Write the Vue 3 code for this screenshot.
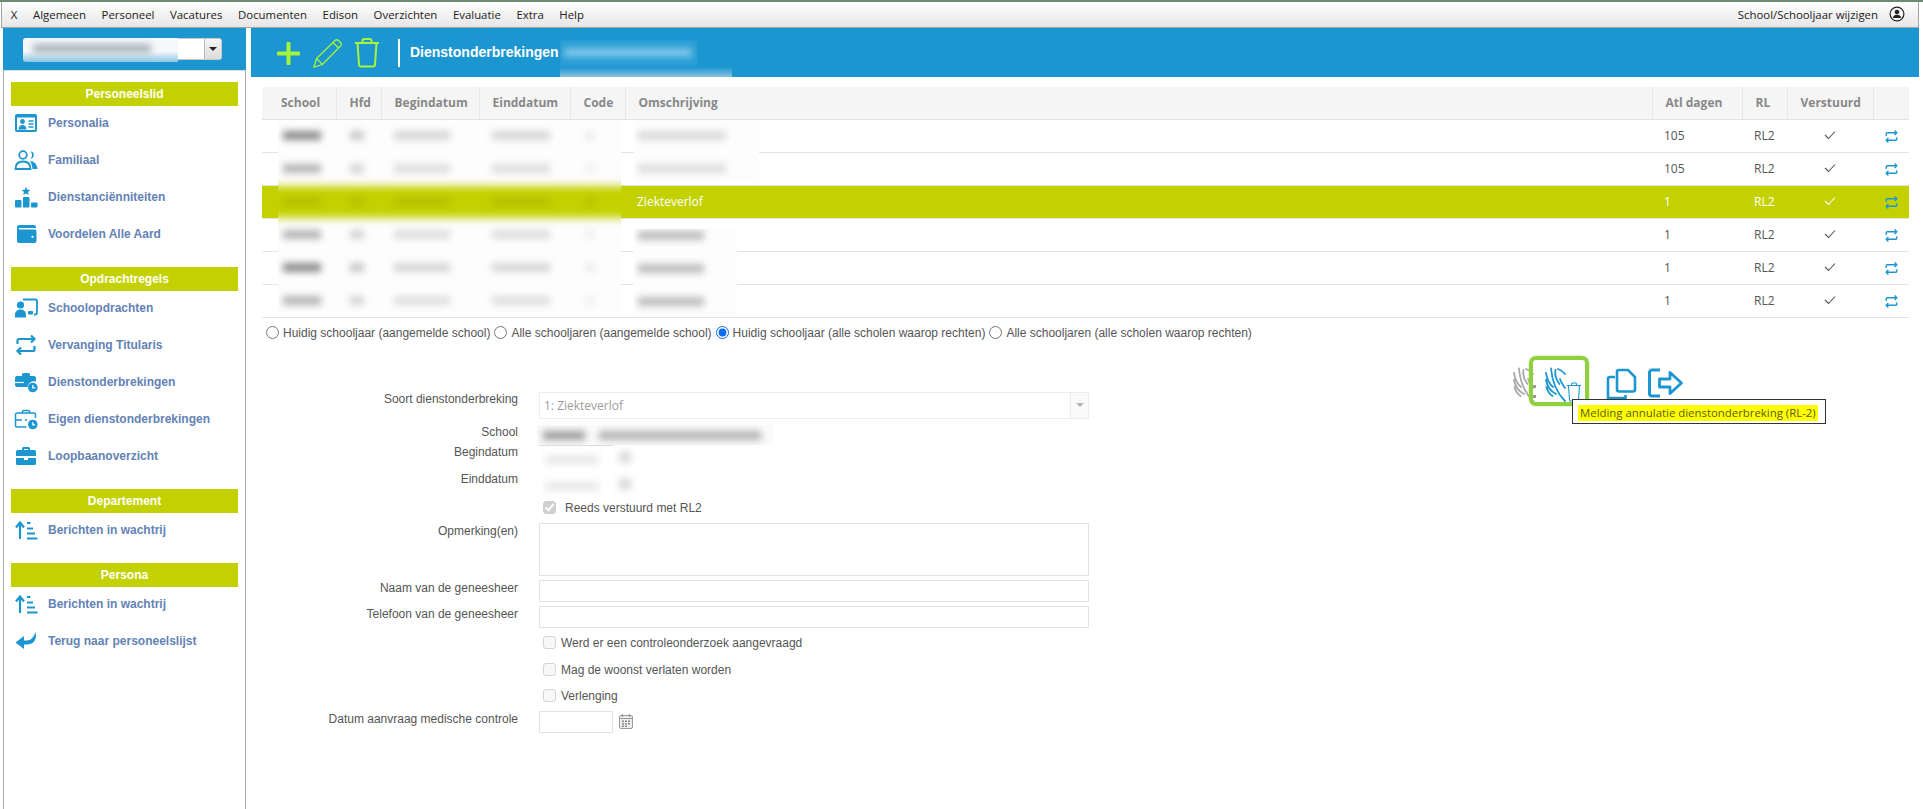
<script setup>
const menu = ['X', 'Algemeen', 'Personeel', 'Vacatures', 'Documenten', 'Edison', 'Overzichten', 'Evaluatie', 'Extra', 'Help']

const B = '#1b96d1'
const icons = {
  card: `<rect x="1" y="3" width="22" height="18" rx="2" fill="${B}"/><rect x="3" y="6.5" width="18" height="12.5" fill="#fff"/><circle cx="8.5" cy="10.5" r="2.4" fill="${B}"/><path d="M4.5 18.5c0-3 1.8-4.6 4-4.6s4 1.600 4 4.600z" fill="${B}"/><path d="M14.500 10h5M14.500 13h5M14.500 16h5" stroke="${B}" stroke-width="1.600"/>`,
  family: `<circle cx="9" cy="7" r="3.800" fill="#fff" stroke="${B}" stroke-width="1.800"/><path d="M16.500 3.200a3.900 3.900 0 0 1 0 7.700a5.500 5.500 0 0 0 0-7.700z" fill="${B}"/><path d="M1.500 21c0-5 3-7.500 7.500-7.500s7.500 2.500 7.500 7.500z" fill="#fff" stroke="${B}" stroke-width="1.800"/><path d="M16 13c4 0 7 3 7.500 8h-5c-.4-3.500-1-5.500-2.500-8z" fill="${B}"/>`,
  podium: `<path d="M12 2l1.300 2.700 3 .4-2.200 2 .6 2.900-2.700-1.400-2.700 1.400.6-2.900-2.200-2 3-.4z" fill="${B}"/><rect x="1" y="15" width="6.500" height="7.500" rx="1" fill="${B}"/><rect x="9" y="12" width="6.500" height="10.500" rx="1" fill="${B}"/><rect x="17" y="17.500" width="6.500" height="5" rx="1" fill="${B}"/>`,
  wallet: `<path d="M5 3h15a2 2 0 0 1 2 2v1H5.500c-1 0-1 1.500 0 1.500H21a1.500 1.500 0 0 1 1.500 1.500v10a2 2 0 0 1-2 2H5a2 2 0 0 1-2-2V5a2 2 0 0 1 2-2z" fill="${B}"/><circle cx="18.500" cy="14.800" r="1.100" fill="#fff"/>`,
  school: `<path d="M9 3.500h12.500a1.500 1.500 0 0 1 1.500 1.500v12a1.500 1.500 0 0 1-1.500 1.500H20" fill="none" stroke="${B}" stroke-width="1.800"/><rect x="14" y="15" width="5" height="3.500" rx=".8" fill="${B}"/><circle cx="6.500" cy="9" r="3.600" fill="${B}"/><path d="M1 21.500v-3c0-3 2.400-5 5.500-5s5.500 2 5.500 5v3z" fill="${B}"/>`,
  swap: `<path d="M3.500 11V7.500a1.500 1.500 0 0 1 1.500-1.500h15M17 2.500l3.500 3.500-3.500 3.500M20.500 13v3.500a1.500 1.500 0 0 1-1.500 1.500H4M7 14.500L3.500 18 7 21.500" fill="none" stroke="${B}" stroke-width="2.200"/>`,
  caseclock: `<path d="M8 6V4.500A1.500 1.500 0 0 1 9.500 3h5A1.500 1.500 0 0 1 16 4.500V6h4a2 2 0 0 1 2 2v3.500a6.500 6.500 0 0 0-8.500 5.500H3a2 2 0 0 1-2-2V8a2 2 0 0 1 2-2z" fill="${B}"/><path d="M1 12.500h9" stroke="#fff" stroke-width="1.200"/><circle cx="18.800" cy="17.500" r="4.800" fill="${B}"/><path d="M18.800 15v2.800h2.400" fill="none" stroke="#fff" stroke-width="1.200"/>`,
  caseclock2: `<path d="M8.500 6V4.500A1 1 0 0 1 9.500 3.500h5A1 1 0 0 1 15.500 4.500V6M12.500 20H3a1.500 1.500 0 0 1-1.500-1.500V7.500A1.500 1.500 0 0 1 3 6h17a1.500 1.500 0 0 1 1.500 1.500V11M1.500 13H8M11 13h2" fill="none" stroke="${B}" stroke-width="1.500"/><circle cx="18.800" cy="17.500" r="4.800" fill="${B}"/><path d="M18.800 15v2.800h2.400" fill="none" stroke="#fff" stroke-width="1.200"/>`,
  briefcase: `<path d="M8 6V4.500A1.500 1.500 0 0 1 9.500 3h5A1.500 1.500 0 0 1 16 4.500V6h4.500A1.500 1.500 0 0 1 22 7.500V12H2V7.500A1.500 1.500 0 0 1 3.500 6zM10 6h4V5h-4zM2 14h8v2h4v-2h8v5.500a1.500 1.500 0 0 1-1.500 1.500h-17A1.500 1.500 0 0 1 2 19.500z" fill="${B}"/>`,
  queue: `<path d="M6 21V5.500M2 9.500L6 4.500l4 5" fill="none" stroke="${B}" stroke-width="2.200"/><path d="M13 5h3.500M13 10.500h6M13 15.500h8M13 20.500h10.500" stroke="${B}" stroke-width="1.800"/>`,
  back: `<path d="M21.500 3c1.500 6-.5 12-8 12.500H10V20L1.500 13.500 10 7v4.500h3c4 0 6.500-3 8.500-8.500z" fill="${B}"/>`
}

const sections = [
  { title: 'Personeelslid', items: [['card', 'Personalia'], ['family', 'Familiaal'], ['podium', 'Dienstanciënniteiten'], ['wallet', 'Voordelen Alle Aard']] },
  { title: 'Opdrachtregels', items: [['school', 'Schoolopdrachten'], ['swap', 'Vervanging Titularis'], ['caseclock', 'Dienstonderbrekingen'], ['caseclock2', 'Eigen dienstonderbrekingen'], ['briefcase', 'Loopbaanoverzicht']] },
  { title: 'Departement', items: [['queue', 'Berichten in wachtrij']] },
  { title: 'Persona', items: [['queue', 'Berichten in wachtrij'], ['back', 'Terug naar personeelslijst']] }
]

const headers = ['School', 'Hfd', 'Begindatum', 'Einddatum', 'Code', 'Omschrijving', 'Atl dagen', 'RL', 'Verstuurd', '']
const widths = [74, 45, 98, 91, 55, 1027, 90, 45, 86, 36]
const rows = [
  { desc: '', days: '105' },
  { desc: '', days: '105' },
  { desc: 'Ziekteverlof', days: '1', active: true },
  { desc: '', days: '1' },
  { desc: '', days: '1' },
  { desc: '', days: '1' }
]

const barCols = [
  { left: 5, width: 38, tone: '#b5b5b5', dark: '#8d8d8d' },
  { left: 72, width: 14, tone: '#d4d4d4', dark: '#c8c8c8' },
  { left: 116, width: 56, tone: '#dedede', dark: '#d6d6d6' },
  { left: 214, width: 58, tone: '#dedede', dark: '#d6d6d6' },
  { left: 308, width: 8, tone: '#eeeeee', dark: '#eaeaea' }
]
const bars = []
for (let r = 0; r < 6; r++) {
  for (const c of barCols) {
    bars.push({
      left: c.left + 'px',
      top: 11 + r * 33 + 'px',
      width: c.width + 'px',
      background: r === 2 ? '#b4c100' : (r === 0 || r === 4 ? c.dark : c.tone)
    })
  }
}

const radios = [
  ['Huidig schooljaar (aangemelde school)', false],
  ['Alle schooljaren (aangemelde school)', false],
  ['Huidig schooljaar (alle scholen waarop rechten)', true],
  ['Alle schooljaren (alle scholen waarop rechten)', false]
]
</script>

<template>
  <div class="app">
    <div class="topline"></div>
    <nav class="menubar">
      <span v-for="m in menu" :key="m" class="menu-item">{{ m }}</span>
      <span class="menu-right">School/Schooljaar wijzigen</span>
      <svg class="profile" viewBox="0 0 16 16" width="16" height="16">
        <circle cx="8" cy="8" r="6.900" fill="#f4f4f4" stroke="#222" stroke-width="1.200" />
        <circle cx="8" cy="6" r="2.300" fill="#222" />
        <path d="M4 12c0-2.400 1.800-3.300 4-3.300s4 .9 4 3.300z" fill="#222" />
      </svg>
    </nav>

    <div class="body">
      <aside class="sidebar">
        <div class="side-head">
          <div class="side-select">
            <div class="select-mask"><span class="select-smear"></span></div>
            <span class="select-btn"><i></i></span>
          </div>
        </div>
        <div class="side-panel">
          <section v-for="s in sections" :key="s.title" class="side-section">
            <h3 class="side-title">{{ s.title }}</h3>
            <a v-for="it in s.items" :key="it[1]" class="side-item">
              <svg class="side-icon" viewBox="0 0 24 24" width="24" height="24" v-html="icons[it[0]]"></svg>
              <span>{{ it[1] }}</span>
            </a>
          </section>
        </div>
      </aside>

      <main class="main">
        <header class="toolbar">
          <svg class="tb-plus" viewBox="0 0 23 23" width="23" height="23">
            <path d="M11.500 1.500v20M1.500 11.500h20" stroke="#a6f53a" stroke-width="4" stroke-linecap="round" />
          </svg>
          <svg class="tb-pencil" viewBox="0 0 30 30" width="30" height="30">
            <path d="M1 29l2.500-8.500L22 2.500c1-1 2.500-1 3.500 0l2 2c1 1 1 2.500 0 3.500L9.500 26.500zM3.500 20.500l6 6M20 4.500l5.500 5.500" fill="none" stroke="#a6f53a" stroke-width="1.300" />
          </svg>
          <svg class="tb-trash" viewBox="0 0 26 30" width="26" height="30">
            <path d="M1 5h24M8.500 5V3a2 2 0 0 1 2-2h5a2 2 0 0 1 2 2v2M3.500 5l1.500 21.500a2 2 0 0 0 2 1.900h12a2 2 0 0 0 2-1.900L22.500 5" fill="none" stroke="#a6f53a" stroke-width="2" />
          </svg>
          <span class="tb-sep"></span>
          <span class="tb-title">Dienstonderbrekingen</span>
          <div class="tb-smear">
            <span class="tb-smear-text"></span>
            <span class="tb-smear-bottom"></span>
          </div>
        </header>

        <div class="table-wrap">
          <table class="grid">
            <colgroup>
              <col v-for="(w, i) in widths" :key="i" :style="{ width: w + 'px' }" />
            </colgroup>
            <thead>
              <tr>
                <th v-for="(h, i) in headers" :key="i">{{ h }}</th>
              </tr>
            </thead>
            <tbody>
              <tr v-for="(r, i) in rows" :key="i" :class="{ active: r.active }">
                <td></td><td></td><td></td><td></td><td></td>
                <td>{{ r.desc }}</td>
                <td>{{ r.days }}</td>
                <td>RL2</td>
                <td class="center">
                  <svg class="tick" viewBox="0 0 12 10" width="12" height="10">
                    <path d="M1 5l3.500 3.500L11 1.500" fill="none" :stroke="r.active ? '#fff' : '#555'" stroke-width="1.100" />
                  </svg>
                </td>
                <td class="center">
                  <svg viewBox="0 0 24 24" width="15" height="15" v-html="icons.swap"></svg>
                </td>
              </tr>
            </tbody>
          </table>
          <div class="mask mask-main">
            <span class="green-smear"></span>
            <span v-for="(b, i) in bars" :key="i" class="smear" :style="b"></span>
          </div>
          <div class="mask mask-desc-a">
            <span class="smear desc-bar-a"></span>
            <span class="smear desc-bar-b"></span>
          </div>
          <div class="mask mask-desc-b">
            <span class="smear desc-bar-c"></span>
            <span class="smear desc-bar-d"></span>
            <span class="smear desc-bar-e"></span>
          </div>
        </div>

        <div class="radios">
          <label v-for="r in radios" :key="r[0]" class="radio">
            <input type="radio" name="scope" :checked="r[1]" />
            <span>{{ r[0] }}</span>
          </label>
        </div>

        <div class="detail">
          <form class="form" @submit.prevent>
            <label class="lbl lbl-up">Soort dienstonderbreking</label>
            <div class="select-box">
              <span class="select-val">1: Ziekteverlof</span>
              <span class="select-arrow"><i></i></span>
            </div>

            <label class="lbl lbl-up">School</label>
            <div class="school-val"><span class="smear s1"></span><span class="smear s2"></span></div>

            <label class="lbl lbl-up">Begindatum</label>
            <div class="date-smear date-top"><span class="smear d1"></span><span class="smear d2"></span></div>

            <label class="lbl lbl-up">Einddatum</label>
            <div class="date-smear"><span class="smear d1"></span><span class="smear d2"></span></div>

            <span></span>
            <label class="check check-wide"><input type="checkbox" checked disabled /><span>Reeds verstuurd met RL2</span></label>

            <label class="lbl">Opmerking(en)</label>
            <textarea class="field area" disabled></textarea>

            <label class="lbl">Naam van de geneesheer</label>
            <input class="field" type="text" disabled />

            <label class="lbl">Telefoon van de geneesheer</label>
            <input class="field" type="text" disabled />

            <span></span>
            <label class="check"><input type="checkbox" disabled /><span>Werd er een controleonderzoek aangevraagd</span></label>

            <span></span>
            <label class="check"><input type="checkbox" disabled /><span>Mag de woonst verlaten worden</span></label>

            <span></span>
            <label class="check"><input type="checkbox" disabled /><span>Verlenging</span></label>

            <label class="lbl">Datum aanvraag medische controle</label>
            <div class="date-row">
              <input class="field date" type="text" disabled />
              <svg viewBox="0 0 14 15" width="14" height="15">
                <rect x=".5" y="1.500" width="13" height="13" rx="1.500" fill="#eee" stroke="#9a9a9a" />
                <path d="M3.500 0v3M10.500 0v3" stroke="#9a9a9a" stroke-width="1.200" />
                <path d="M1 4.500h12" stroke="#9a9a9a" />
                <path d="M3 6.500h2v1.500H3zM6 6.500h2v1.500H6zM9 6.500h2v1.500H9zM3 9h2v1.500H3zM6 9h2v1.500H6zM9 9h2v1.500H9zM3 11.500h2V13H3zM6 11.500h2V13H6z" fill="#8a8a8a" />
              </svg>
            </div>
          </form>

          <div class="actions">
            <button class="act act-grey" type="button">
              <svg viewBox="0 0 24 36" width="24" height="36">
                <g fill="none" stroke="#a9a9a9" stroke-width="1.800" stroke-linecap="round">
                  <path d="M6 1.500C7 14 12 26 20 34M1 6c1 6 3 11 7 14M1 13c1 6 4 11 10 14M1.500 20c1 4 3 7 6 9M10.500 3c-1 5 1 10 4 14M13 2c3 1 5 2 7 5M15 12c1 3 3 6 5 9" />
                </g>
                <path d="M20 18h3v3h-3zM20 28h3v3h-3z" fill="#9a9a9a" />
              </svg>
            </button>
            <button class="act act-focus" type="button">
              <svg class="palm" viewBox="0 0 24 36" width="24" height="36">
                <g fill="none" stroke="#1b96d1" stroke-width="1.800" stroke-linecap="round">
                  <path d="M6 1.500C7 14 12 26 20 34M1 6c1 6 3 11 7 14M1 13c1 6 4 11 10 14M1.500 20c1 4 3 7 6 9M10.500 3c-1 5 1 10 4 14M13 2c3 1 5 2 7 5M15 12c1 3 3 6 5 9" />
                </g>
              </svg>
              <svg class="mini-trash" viewBox="0 0 16 20" width="16" height="20">
                <path d="M1 3.500h14M5.500 3.500V2a1 1 0 0 1 1-1h3a1 1 0 0 1 1 1v1.500M2.500 3.500l1 14.500a1 1 0 0 0 1 1h7a1 1 0 0 0 1-1l1-14.500" fill="#fff" stroke="#1b96d1" stroke-width="1.100" />
              </svg>
              <span class="tooltip"><span>Melding annulatie dienstonderbreking (RL-2)</span></span>
            </button>
            <button class="act act-copy" type="button">
              <svg viewBox="0 0 31 32" width="31" height="32">
                <path d="M13 2h9l7 7v12.500a2 2 0 0 1-2 2H13a2 2 0 0 1-2-2V4a2 2 0 0 1 2-2z" fill="#fff" stroke="#1b96d1" stroke-width="2.600" />
                <path d="M9 9H4a2 2 0 0 0-2 2v19h17.500v-3" fill="none" stroke="#1b96d1" stroke-width="2.600" />
              </svg>
            </button>
            <button class="act act-exit" type="button">
              <svg viewBox="0 0 36 30" width="36" height="30">
                <path d="M12 2H4a2.500 2.500 0 0 0-2.500 2.500v21A2.500 2.500 0 0 0 4 28h8" fill="none" stroke="#1b96d1" stroke-width="3" />
                <path d="M11.500 11H22V4.500L33.500 15 22 25.500V19H11.500z" fill="#fff" stroke="#1b96d1" stroke-width="2.800" stroke-linejoin="round" />
              </svg>
            </button>
          </div>
        </div>
      </main>
    </div>
  </div>
</template>

<style scoped>
.app {
  width: 1923px;
  height: 809px;
  overflow: hidden;
  background: #fff;
  font-family: "Liberation Sans", Arial, sans-serif;
  font-size: 12px;
  color: #555;
}
.topline {
  height: 2px;
  background: #6e8a70;
}
.menubar {
  display: flex;
  align-items: center;
  box-sizing: border-box;
  width: 1918px;
  height: 26px;
  margin-left: 1px;
  padding: 0 13px 1px 1px;
  background: linear-gradient(#ffffff, #e6e6e6);
  border: 1px solid #a3a3a3;
  border-top: 0;
  font-family: "Open Sans", sans-serif;
  font-size: 11.400px;
  color: #222;
}
.menu-item {
  padding: 0 7.800px;
}
.menu-right {
  margin-left: auto;
}
.profile {
  margin-left: 11px;
}

.body {
  display: flex;
}
.sidebar {
  width: 243px;
  margin-left: 3px;
  flex: none;
}
.side-head {
  height: 42px;
  box-sizing: border-box;
  padding: 10px 24px 0 20px;
  background: #1b96d1;
}
.side-select {
  position: relative;
  display: flex;
  justify-content: flex-end;
  height: 22px;
  background: #fff;
  border-radius: 3px;
  border: 1px solid #c9c9c9;
  box-sizing: border-box;
}
.select-mask {
  position: absolute;
  left: -1px;
  top: -1px;
  width: 155px;
  height: 24px;
  overflow: hidden;
  background: linear-gradient(#f6f9fb 55%, #8cc6e5);
  border-radius: 3px 0 0 3px;
}
.select-smear {
  position: absolute;
  left: 10px;
  top: 6px;
  width: 118px;
  height: 9px;
  background: #a9b4ba;
  filter: blur(3.500px);
}
.select-btn {
  display: flex;
  align-items: center;
  justify-content: center;
  width: 16px;
  background: linear-gradient(#f5f5f5, #dcdcdc);
  border-left: 1px solid #bbb;
  border-radius: 0 3px 3px 0;
}
.select-btn i {
  width: 0;
  height: 0;
  border: 4px solid transparent;
  border-top: 4px solid #222;
  border-bottom: 0;
}
.side-panel {
  box-sizing: border-box;
  height: 739px;
  padding: 11px 7px 0;
  border: 1px solid #a9a9a9;
  border-top-color: #ddd;
  border-bottom: 0;
}
.side-section {
  display: flex;
  flex-direction: column;
  margin-bottom: 13px;
}
.side-title {
  margin: 0;
  height: 24px;
  line-height: 24px;
  text-align: center;
  background: #c4d100;
  color: #fff;
  font-size: 12px;
  font-weight: 700;
}
.side-item {
  display: flex;
  align-items: center;
  gap: 10px;
  height: 33px;
  margin-bottom: 4px;
  padding-left: 3px;
  color: #6382b5;
  font-weight: 700;
  font-size: 12px;
}
.side-icon {
  flex: none;
}

.main {
  width: 1668px;
  margin-left: 5px;
  flex: none;
}
.toolbar {
  position: relative;
  display: flex;
  align-items: center;
  height: 49px;
  padding-left: 26px;
  box-sizing: border-box;
  background: #1b96d1;
}
.tb-plus { margin-top: 1px; }
.tb-pencil { margin-left: 13px; }
.tb-trash { margin-left: 11px; }
.tb-sep {
  width: 2px;
  height: 28px;
  margin-left: 18px;
  background: #fff;
}
.tb-title {
  margin-left: 10px;
  color: #fff;
  font-size: 14px;
  font-weight: 700;
  margin-top: -2px;
}
.tb-smear {
  position: absolute;
  left: 309px;
  top: 12px;
  width: 172px;
  height: 37px;
  overflow: hidden;
}
.tb-smear::before {
  content: "";
  position: absolute;
  left: 0;
  top: 0;
  width: 137px;
  height: 26px;
  background: #2b9fd6;
  filter: blur(1px);
}
.tb-smear-text {
  position: absolute;
  left: 4px;
  top: 8px;
  width: 128px;
  height: 9px;
  background: #7cc5e8;
  filter: blur(3px);
}
.tb-smear-bottom {
  position: absolute;
  left: 0;
  right: 0;
  bottom: 0;
  height: 10px;
  background: linear-gradient(#1b96d1, #8ac2df);
}

.table-wrap {
  position: relative;
  margin: 10px 10px 0 11px;
}
.grid {
  table-layout: fixed;
  width: 1647px;
  border-collapse: collapse;
  font-family: "Open Sans", sans-serif;
  font-size: 12px;
  color: #555;
}
.grid th {
  height: 32px;
  padding: 0 0 0 13px;
  box-sizing: border-box;
  text-align: left;
  background: #f5f5f5;
  color: #888;
  font-weight: 700;
  border-right: 1px solid #e6e6e6;
  border-bottom: 1px solid #e2e2e2;
}
.grid th:first-child {
  padding-left: 19px;
}
.grid th:last-child {
  border-right: 0;
}
.grid td {
  height: 33px;
  box-sizing: border-box;
  padding: 0 0 0 12px;
  border-bottom: 1px solid #e4e4e4;
}
.grid td.center {
  padding: 0;
  text-align: center;
}
.grid td.center svg {
  vertical-align: middle;
}
.grid td.center svg.tick {
  margin-top: -3px;
}
.grid tr.active td {
  background: #c4d100;
  color: #fff;
}
.mask {
  position: absolute;
  overflow: hidden;
  background: #fdfdfd;
}
.mask-main {
  left: 16px;
  top: 33px;
  width: 343px;
  height: 193px;
}
.mask-desc-a {
  left: 372px;
  top: 33px;
  width: 125px;
  height: 62px;
}
.mask-desc-b {
  left: 372px;
  top: 142px;
  width: 103px;
  height: 88px;
}
.smear {
  position: absolute;
  height: 9px;
  filter: blur(3.500px);
}
.green-smear {
  position: absolute;
  left: -12px;
  right: -12px;
  top: 66px;
  height: 32px;
  background: #c4d100;
  filter: blur(4px);
}
.desc-bar-a { left: 4px; top: 11px; width: 88px; background: #dadada; }
.desc-bar-b { left: 4px; top: 44px; width: 88px; background: #dedede; }
.desc-bar-c { left: 4px; top: 2px; width: 66px; background: #bdbdbd; }
.desc-bar-d { left: 4px; top: 35px; width: 66px; background: #bdbdbd; }
.desc-bar-e { left: 4px; top: 68px; width: 66px; background: #bdbdbd; }

.radios {
  display: flex;
  align-items: center;
  height: 30px;
  padding-left: 15px;
  gap: 4px;
  white-space: nowrap;
}
.radio {
  display: flex;
  align-items: center;
  gap: 4px;
}
.radio input {
  width: 13px;
  height: 13px;
  margin: 0;
  accent-color: #0a6cf0;
}

.detail {
  display: flex;
  align-items: flex-start;
}
.form {
  display: grid;
  flex: none;
  width: 838px;
  box-sizing: border-box;
  padding-top: 44px;
  grid-template-columns: 267px 550px;
  column-gap: 21px;
  grid-template-rows: 33px 20px 27px 28px 23px 57px 26px 29px 27px 26px 23px 22px;
}
.lbl {
  line-height: 16px;
  text-align: right;
  white-space: nowrap;
}
.lbl-up {
  margin-top: -1px;
}
.select-box {
  display: flex;
  justify-content: space-between;
  height: 27px;
  box-sizing: border-box;
  border: 1px solid #ededed;
}
.select-val {
  padding-left: 4px;
  line-height: 25px;
  font-family: "Open Sans", sans-serif;
  color: #9d9d9d;
}
.select-arrow {
  display: flex;
  align-items: center;
  justify-content: center;
  width: 17px;
  background: #fafafa;
  border-left: 1px solid #ededed;
}
.select-arrow i {
  width: 0;
  height: 0;
  border: 4px solid transparent;
  border-top: 4px solid #b3b3b3;
  border-bottom: 0;
}
.school-val {
  position: relative;
  width: 236px;
  height: 20px;
  margin-left: -2px;
  background: #fafafa;
}
.s1 { left: 6px; top: 6px; width: 42px; background: #9d9d9d; }
.s2 { left: 62px; top: 6px; width: 162px; background: #b4b4b4; }
.date-smear {
  position: relative;
  width: 100px;
}
.date-top::before {
  content: "";
  position: absolute;
  left: 0;
  top: 0;
  width: 74px;
  height: 1px;
  background: #dedede;
}
.d1 { left: 6px; top: 10px; width: 54px; background: #e9e9e9; }
.d2 { left: 80px; top: 6px; width: 12px; height: 12px; background: #dcdcdc; }
.check {
  display: flex;
  align-items: center;
  height: 16px;
  padding-left: 4px;
  gap: 5px;
  white-space: nowrap;
}
.check-wide {
  gap: 9px;
}
.check input {
  appearance: none;
  position: relative;
  flex: none;
  width: 13px;
  height: 13px;
  margin: 0;
  background: #f8f8f8;
  border: 1px solid #d4d4d4;
  border-radius: 3px;
  box-sizing: border-box;
}
.check input:checked {
  background: #cfcfcf;
  border-color: #cfcfcf;
}
.check input:checked::after {
  content: "";
  position: absolute;
  left: 3px;
  top: 0;
  width: 3px;
  height: 7px;
  border: solid #fff;
  border-width: 0 2px 2px 0;
  transform: rotate(40deg);
}
.field {
  display: block;
  width: 550px;
  height: 22px;
  margin: 0;
  padding: 0;
  box-sizing: border-box;
  background: #fff;
  border: 1px solid #e3e3e3;
  resize: none;
}
.area {
  height: 53px;
}
.date-row {
  display: flex;
  align-items: center;
  gap: 6px;
}
.date {
  width: 74px;
}

.actions {
  display: flex;
  align-items: flex-start;
  margin-left: 424px;
  padding-top: 8px;
}
.act {
  padding: 0;
  background: none;
  border: 0;
}
.act-grey {
  width: 16px;
  margin-top: 11px;
}
.act-focus {
  position: relative;
  width: 60px;
  height: 50px;
  box-sizing: border-box;
  border: 4px solid #8fd03e;
  border-radius: 7px;
  box-shadow: 0 0 2px #a8dc6a;
}
.palm {
  position: absolute;
  left: 12px;
  top: 7px;
}
.mini-trash {
  position: absolute;
  left: 33px;
  top: 22px;
}
.tooltip {
  position: absolute;
  left: 39px;
  top: 39px;
  display: block;
  box-sizing: border-box;
  width: 254px;
  height: 25px;
  padding: 5px 0 0 5px;
  background: #fff;
  border: 1px solid #333;
  font-family: "Open Sans", sans-serif;
  font-size: 11.400px;
  line-height: 16px;
  color: #5a5a20;
  text-align: left;
  white-space: nowrap;
}
.tooltip span {
  display: inline-block;
  background: #ffff00;
  padding: 0 2px;
}
.act-copy {
  margin: 12px 0 0 17px;
}
.act-exit {
  margin: 12px 0 0 11px;
}
.act svg { display: block; }
.act-grey svg { overflow: visible; }
</style>

<style>
html, body {
  margin: 0;
  background: #fff;
}
</style>
